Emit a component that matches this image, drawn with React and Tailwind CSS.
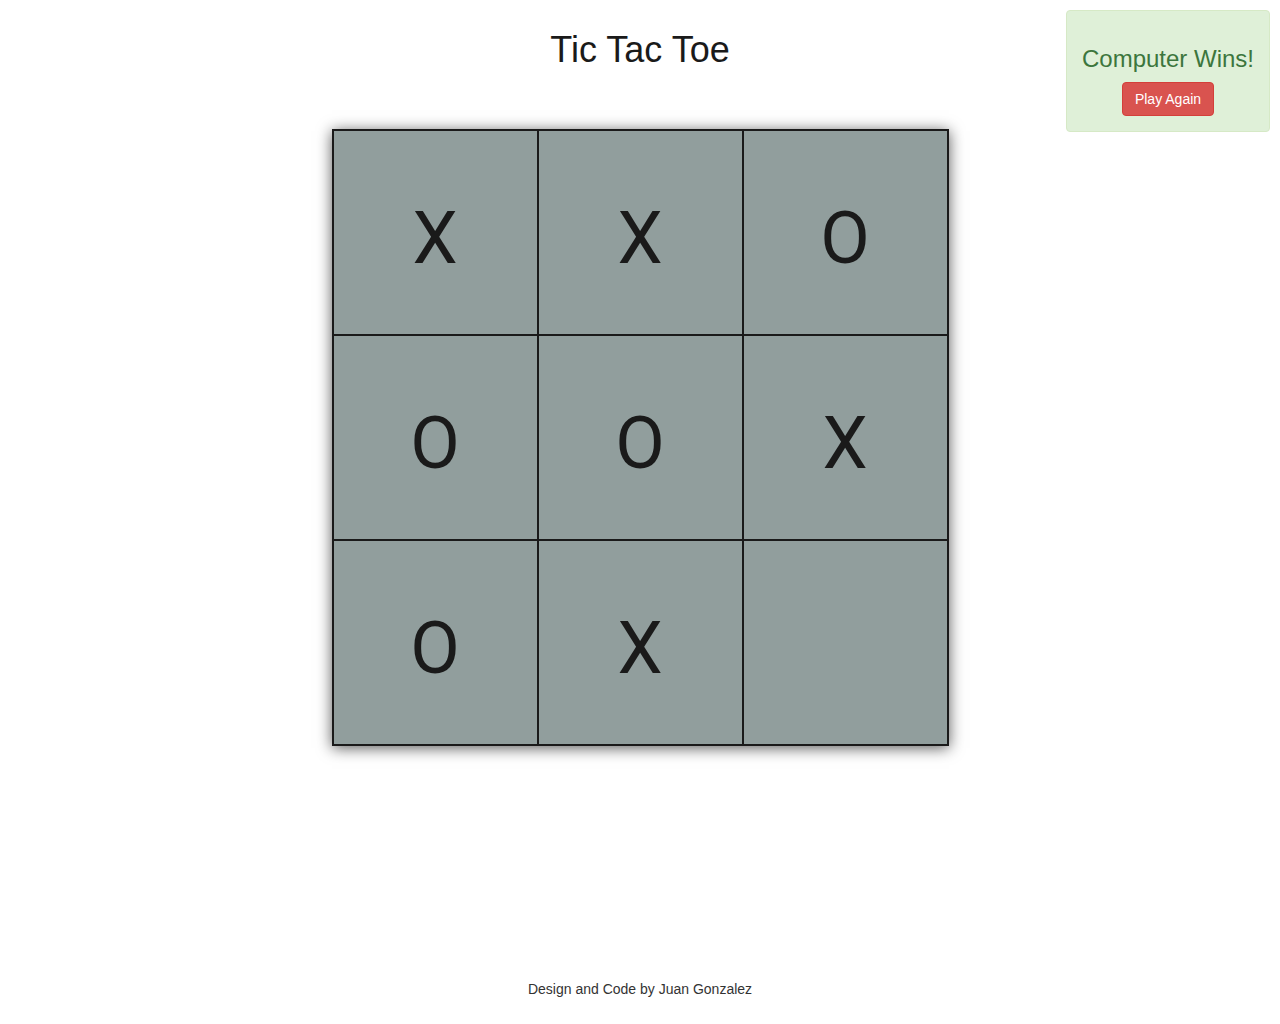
import React from "react";

const cells = ["X", "X", "O", "O", "O", "X", "O", "X", ""];

export default function App() {
  return (
    <div
      className="relative min-h-screen flex flex-col items-center bg-white text-[#333]"
      style={{ fontFamily: '"Liberation Sans", Arial, sans-serif' }}
    >
      <h1 className="mt-[30px] text-[36px] leading-[40px] text-[#1a1a1a]">Tic Tac Toe</h1>

      <div className="mt-[59px] grid grid-cols-3 border border-[#1a1a1a] shadow-[0_2px_14px_rgba(0,0,0,0.65)]">
        {cells.map((c, i) => (
          <div
            key={i}
            className="w-[205px] h-[205px] border border-[#1a1a1a] bg-[#919e9d] flex items-center justify-center pt-[13px] text-[72px] leading-none text-[#1a1a1a]"
            style={{ fontFamily: 'Roboto, "Liberation Sans", sans-serif' }}
          >
            {c}
          </div>
        ))}
      </div>

      <div className="mt-auto pb-[25px] text-[14px] leading-[20px] text-[#333]">
        Design and Code by Juan Gonzalez
      </div>

      <div className="absolute top-[10px] right-[10px] w-[204px] rounded-[4px] border border-[#d6e9c6] bg-[#dff0d8] px-[15px] pt-[15px] pb-[15px] flex flex-col items-center">
        <h3 className="mt-[20px] mb-[10px] text-[24px] leading-[26px] text-[#3c763d] whitespace-nowrap">
          Computer Wins!
        </h3>
        <button className="rounded-[4px] border border-[#d43f3a] bg-[#d9534f] px-[12px] py-[6px] text-[14px] leading-[20px] text-white">
          Play Again
        </button>
      </div>
    </div>
  );
}
